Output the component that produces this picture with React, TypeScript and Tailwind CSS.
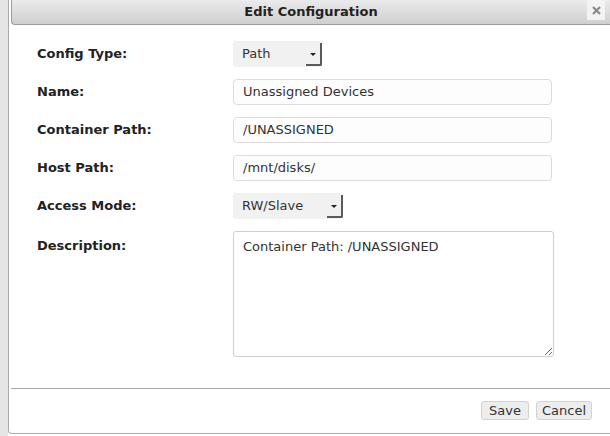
const font = { fontFamily: '"DejaVu Sans", Verdana, sans-serif' };

function FakeSelect({ value, width }: { value: string; width: string }) {
  return (
    <div
      className={`relative flex h-[26px] items-center rounded-[3px] bg-[#f1f1f1] pl-[9px] text-[13px] text-[#333] ${width}`}
    >
      {value}
      <span className="absolute top-[2px] right-0 bottom-[1px] w-[16px] rounded-br-[2px] border-r-2 border-b-2 border-[#5a5a5a]" />
      <span className="absolute top-[12px] right-[6px] h-0 w-0 border-x-[3px] border-t-[3px] border-x-transparent border-t-[#222]" />
    </div>
  );
}

function TextInput({ value }: { value: string }) {
  return (
    <div className="flex h-[26px] w-[319px] items-center rounded-[4px] border border-[#dcdcdc] bg-[#fdfdfd] px-[9px] text-[13px] text-[#333]">
      {value}
    </div>
  );
}

function Row({ label, children }: { label: string; children: React.ReactNode }) {
  return (
    <div className="flex items-center">
      <div className="w-[196px] text-[13px] font-bold text-[#222]">{label}</div>
      {children}
    </div>
  );
}

export default function App() {
  return (
    <div className="flex h-[436px] w-[610px] overflow-hidden bg-white" style={font}>
      <div className="h-full w-[8px] shrink-0 bg-[#e5e5e5]" />
      <div className="flex w-[602px] shrink-0 flex-col">
        <div className="flex h-[434px] flex-col rounded-bl-[4px] border-b border-l border-[#aaaaaa] bg-white pl-[2px]">
          {/* title bar */}
          <div className="relative flex h-[25px] shrink-0 items-center justify-center rounded-bl-[4px] border-b border-l border-[#9c9c9c] bg-gradient-to-b from-[#ebebeb] to-[#cfcfcf]">
            <span className="text-[13px] font-bold text-[#222]">Edit Configuration</span>
            <div className="absolute top-0 right-[5px] flex h-[20px] w-[18px] items-center justify-center bg-[#f3f3f3]">
              <svg width="9" height="9" viewBox="0 0 9 9">
                <path d="M1 1L8 8M8 1L1 8" stroke="#8a8a8a" strokeWidth="2.2" />
              </svg>
            </div>
          </div>

          {/* form */}
          <div className="flex h-[363px] shrink-0 flex-col gap-[12px] pt-[16px] pl-[26px]">
            <Row label="Config Type:">
              <FakeSelect value="Path" width="w-[89px]" />
            </Row>
            <Row label="Name:">
              <TextInput value="Unassigned Devices" />
            </Row>
            <Row label="Container Path:">
              <TextInput value="/UNASSIGNED" />
            </Row>
            <Row label="Host Path:">
              <TextInput value="/mnt/disks/" />
            </Row>
            <Row label="Access Mode:">
              <FakeSelect value="RW/Slave" width="w-[110px]" />
            </Row>
            <div className="flex items-start">
              <div className="w-[196px] pt-[5px] text-[13px] font-bold text-[#222]">Description:</div>
              <textarea
                readOnly
                defaultValue="Container Path: /UNASSIGNED"
                className="h-[126px] w-[321px] resize rounded-[3px] border border-[#d0d0d0] bg-white px-[9px] pt-[7px] text-[13px] leading-[16px] text-[#333] outline-none"
                style={font}
              />
            </div>
          </div>

          {/* buttons */}
          <div className="flex flex-1 items-center justify-end gap-[7px] border-t border-[#a8a8a8] pr-[18px] pb-[2px]">
            <button className="h-[19px] rounded-[3px] border border-[#d2d2d2] bg-[#ededed] px-[7px] text-[13px] leading-[17px] text-[#333]">
              Save
            </button>
            <button className="h-[19px] rounded-[3px] border border-[#d2d2d2] bg-[#ededed] px-[5px] text-[13px] leading-[17px] text-[#333]">
              Cancel
            </button>
          </div>
        </div>

        {/* page content peeking out below the dialog */}
        <div className="h-[2px] overflow-hidden">
          <div className="flex items-center gap-[4px] pl-[111px] text-[11px] text-[#777]">
            <span className="h-[8px] w-[8px] bg-[#56647a]" />
            <span>Use Unassigned Devices Plugin for mounted disks</span>
          </div>
        </div>
      </div>
    </div>
  );
}
